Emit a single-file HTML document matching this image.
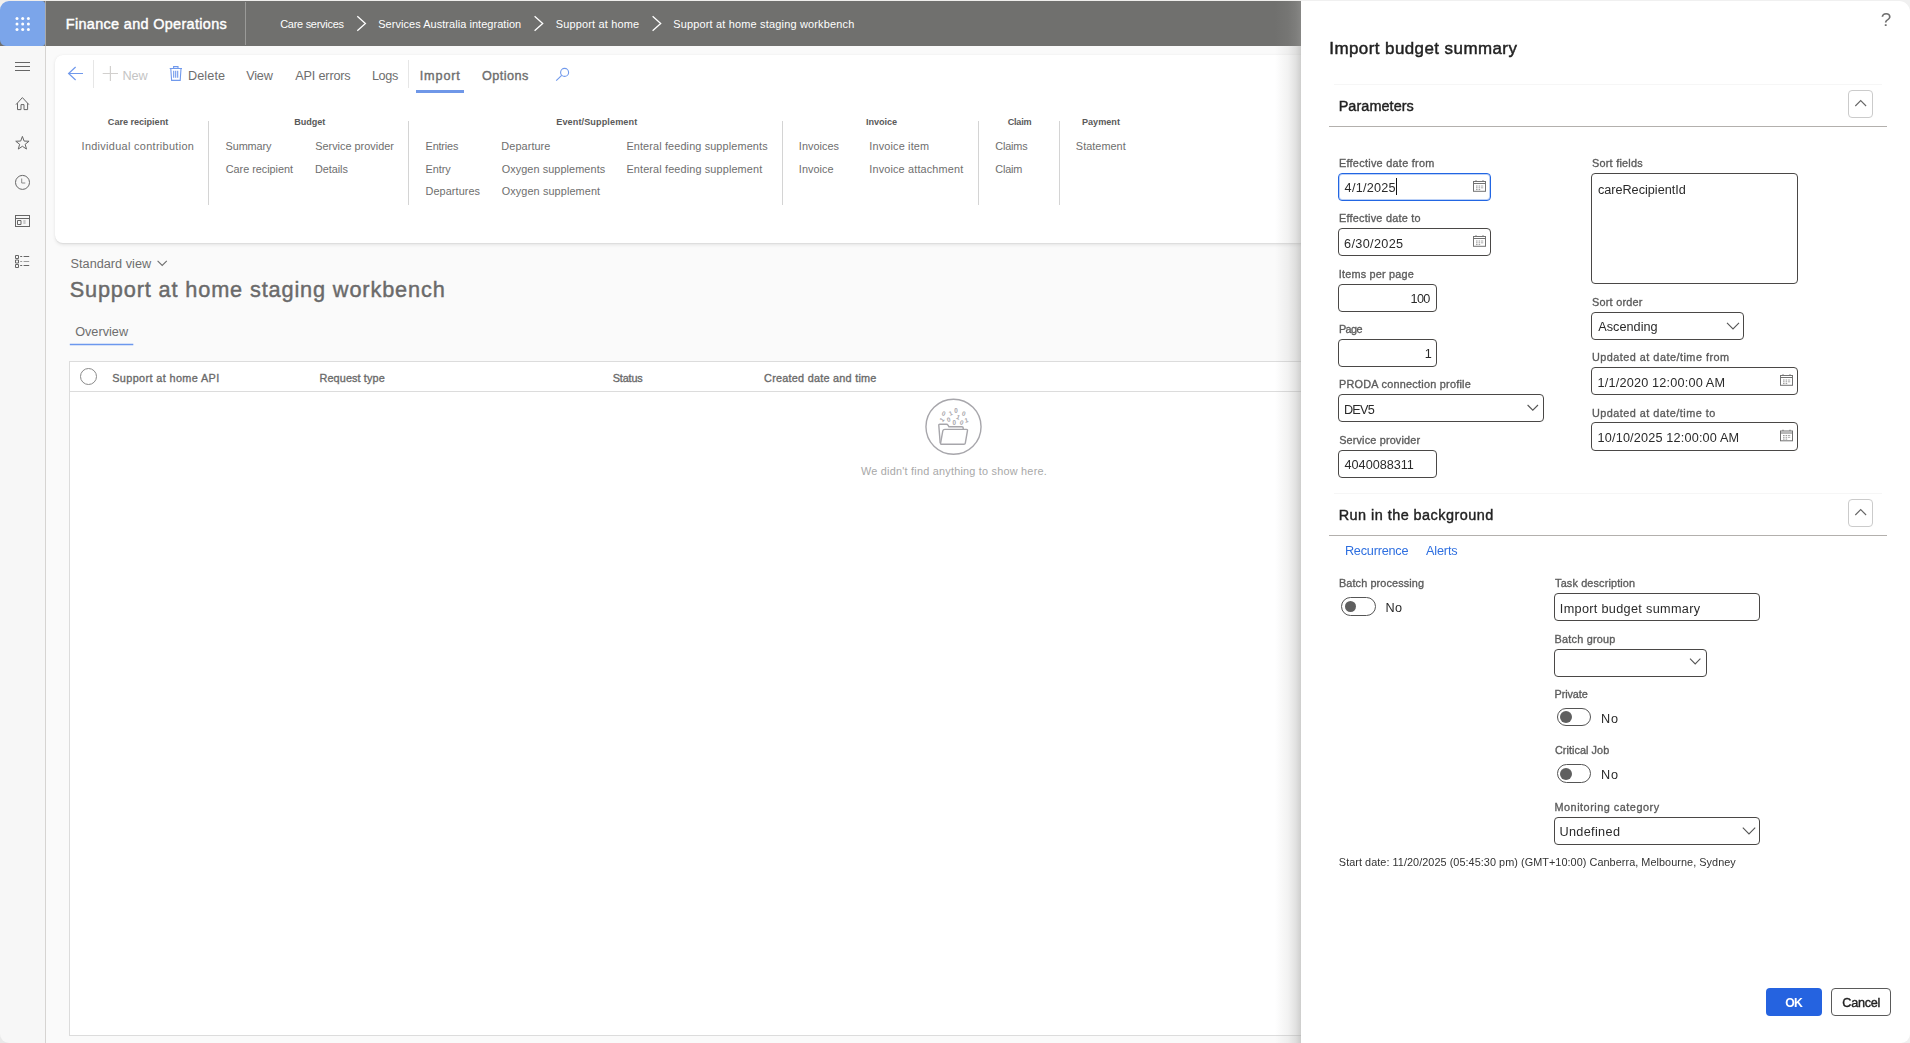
<!DOCTYPE html>
<html lang="en">
<head>
<meta charset="utf-8">
<title>Support at home staging workbench</title>
<style>
*{box-sizing:border-box;margin:0;padding:0}
html,body{width:1910px;height:1043px;overflow:hidden;background:#fafafa;font-family:"Liberation Sans",sans-serif}
.a{position:absolute}
.t{position:absolute;white-space:nowrap;line-height:20px;height:20px}
.box{position:absolute;background:#fff;border:1px solid #4a4846;border-radius:4px}
.vd{position:absolute;width:1px;background:#d4d4d4}
.tg{position:absolute;width:35px;height:19px;border:1px solid #555;border-radius:10px;background:#fff}
.tg i{position:absolute;left:3px;top:3px;width:11px;height:11px;border-radius:50%;background:#5f5f5f}
svg{position:absolute;overflow:visible}
</style>
</head>
<body>
<!-- top hairline -->
<div class="a" style="left:0;top:0;width:1910px;height:1px;background:#efeeec"></div>
<!-- header -->
<div class="a" id="hdr" style="left:0;top:1px;width:1910px;height:45px;background:#70706e"></div>
<div class="a" style="left:0;top:1px;width:10px;height:10px;background:#f1f0ee"></div>
<div class="a" style="left:0;top:1px;width:45px;height:45px;background:#7ba5ea;border-radius:9px 3px 3px 6px"></div>
<svg style="left:0;top:1px" width="45" height="45" viewBox="0 0 45 45"><g fill="#fff">
<circle cx="17" cy="17.5" r="1.5"/><circle cx="22.7" cy="17.5" r="1.5"/><circle cx="28.4" cy="17.5" r="1.5"/>
<circle cx="17" cy="23" r="1.5"/><circle cx="22.7" cy="23" r="1.5"/><circle cx="28.4" cy="23" r="1.5"/>
<circle cx="17" cy="28.5" r="1.5"/><circle cx="22.7" cy="28.5" r="1.5"/><circle cx="28.4" cy="28.5" r="1.5"/></g></svg>
<div class="a" style="left:245px;top:2px;width:1px;height:43px;background:#9a9a98"></div>
<svg style="left:0;top:0" width="700" height="46" viewBox="0 0 700 46"><g fill="none" stroke="#fff" stroke-width="1.3">
<path d="M357.3 16.2 L365.4 23.5 L357.3 30.8"/><path d="M534.6 16.2 L542.7 23.5 L534.6 30.8"/><path d="M652.6 16.2 L660.7 23.5 L652.6 30.8"/></g></svg>

<!-- sidebar -->
<div class="a" style="left:0;top:1033px;width:10px;height:10px;background:#e9e9e9"></div>
<div class="a" style="left:0;top:46px;width:45px;height:997px;background:#f7f7f7;border-radius:0 0 0 9px"></div>
<div class="a" style="left:45px;top:46px;width:1px;height:997px;background:#d6d4d2"></div>
<div class="a" style="left:45px;top:1px;width:1px;height:45px;background:#a9a9a8"></div>
<svg style="left:0;top:46px" width="45" height="240" viewBox="0 46 45 240"><g fill="none" stroke="#666" stroke-width="1">
<path d="M15 62.5H30M15 66.5H30M15 70.5H30"/>
<path d="M16 104.6 L22.4 97.6 L28.9 104.6M17.5 103.2 V109.6 H21 V104.6 H24 V109.6 H27.6 V103.2"/>
<path d="M22.40 136.40 L24.10 141.05 L29.06 141.24 L25.16 144.30 L26.51 149.06 L22.40 146.30 L18.29 149.06 L19.64 144.30 L15.74 141.24 L20.70 141.05 Z"/>
<circle cx="22.5" cy="182.4" r="7"/><path d="M21.7 178.5 V183 H25.3" stroke="#8a8a8a"/>
<rect x="15.5" y="215.5" width="14" height="11"/><path d="M15.5 218.5H29.5M17.5 220.5H21V224.5H17.5Z"/><path d="M23.3 221H25.6M23.3 223H25.6" stroke="#9a9a9a"/>
<path d="M15.5 255.5H18.5V258.5H15.5ZM15.5 260H18.5V263H15.5ZM15.5 264.5H18.5V267.5H15.5ZM20.2 256.5H22.2M23.6 256.5H29.2M20.2 265.5H22.2M23.6 265.5H29.2"/><path stroke="#9c9c9c" d="M20.2 261.5H22.2M23.6 261.5H29.2"/>
</g></svg>

<!-- action pane card -->
<div class="a" style="left:55px;top:55px;width:1400px;height:188px;background:#fff;border-radius:8px;box-shadow:0 1.6px 3.6px rgba(0,0,0,.085),0 .3px .9px rgba(0,0,0,.055)"></div>
<svg style="left:55px;top:55px" width="600" height="40" viewBox="55 55 600 40"><g fill="none">
<path d="M83 73.5H68.8M75.6 67 L68.6 73.5 L75.6 80" stroke="#7099ec" stroke-width="1.2"/>
<path d="M102.7 73.5H118M110.4 66V81" stroke="#d2d0ce" stroke-width="1.2"/>
<path d="M169.7 68.5H182M173.6 68.5V66.6H178V68.5M170.8 68.8 L171.6 80.4 H180.2 L181 68.8M173.7 70.8V77.7M175.7 70.8V77.7M177.7 70.8V77.7" stroke="#7099ec" stroke-width="1.1"/>
<circle cx="564.6" cy="72.4" r="4" stroke="#7099ec" stroke-width="1.1"/><path d="M561.7 75.3 L556.2 80.7" stroke="#7099ec" stroke-width="1.1"/>
</g></svg>
<div class="vd" style="left:93px;top:60px;height:28px;background:#e6e6e6"></div>
<div class="vd" style="left:408px;top:60px;height:28px;background:#e6e6e6"></div>
<div class="a" style="left:416px;top:90px;width:48px;height:3px;background:#6f97e8"></div>
<div class="vd" style="left:208px;top:121px;height:84px"></div>
<div class="vd" style="left:408px;top:121px;height:84px"></div>
<div class="vd" style="left:782px;top:121px;height:84px"></div>
<div class="vd" style="left:978px;top:121px;height:84px"></div>
<div class="vd" style="left:1059px;top:121px;height:84px"></div>

<!-- page title area -->
<svg style="left:155px;top:258px" width="14" height="10" viewBox="155 258 14 10"><path d="M157.6 260.8 L162.2 265.4 L166.8 260.8" fill="none" stroke="#6e6e6e" stroke-width="1.1"/></svg>
<svg style="left:70px;top:342px" width="64" height="4" viewBox="70 342 64 4"><path d="M69.8 344.5H133.3" stroke="#6c98ee" stroke-width="1.5"/></svg>
<!-- grid -->
<div class="a" style="left:69px;top:361px;width:1400px;height:675px;background:#fff;border:1px solid #dcdcdc"></div>
<div class="a" style="left:70px;top:391px;width:1400px;height:1px;background:#dcdcdc"></div>
<div class="a" style="left:80px;top:368px;width:17px;height:17px;border:1px solid #8a8a8a;border-radius:50%;background:#fff"></div>
<!-- empty state -->
<svg style="left:920px;top:395px" width="66" height="64" viewBox="920 395 66 64"><g fill="none" stroke="#a7a6ab" stroke-width="1.4">
<circle cx="953.5" cy="426.75" r="27.55"/>
<path d="M940.2 443.3 L938.8 425.4 Q938.7 424.3 939.8 424.3 H946.5 Q947.5 424.3 948 425.2 L948.9 426.7 H962 Q963.2 426.7 963.2 427.9 V429.2"/>
<path d="M944.9 429.4 H966.5 Q967.7 429.4 967.5 430.5 L965.3 443.2 Q965.1 444.3 964 444.3 H941.6 Q940.4 444.3 940.6 443.2 L942.8 430.9 Q943.1 429.4 944.9 429.4 Z"/>
</g>
<g fill="#a7a6ab" font-family="Liberation Sans, sans-serif" font-size="6.3" font-weight="bold"><text x="941.95" y="415.65" transform="rotate(20 943.7 413.4)">0</text><text x="948.85" y="415.65" transform="rotate(-20 950.6 413.4)">1</text><text x="954.25" y="412.65" transform="rotate(0 956 410.4)">0</text><text x="962.05" y="415.85" transform="rotate(15 963.8 413.6)">0</text><text x="940.05" y="421.85" transform="rotate(-50 941.8 419.6)">1</text><text x="946.95" y="421.85" transform="rotate(-15 948.7 419.6)">0</text><text x="956.45" y="419.35" transform="rotate(20 958.2 417.1)">1</text><text x="952.55" y="424.65" transform="rotate(0 954.3 422.4)">0</text><text x="959.85" y="424.65" transform="rotate(20 961.6 422.4)">0</text><text x="964.65" y="422.45" transform="rotate(-15 966.4 420.2)">1</text></g></svg>

<!-- dialog shadow + dialog -->
<div class="a" style="left:1275px;top:1px;width:26px;height:1042px;background:linear-gradient(to right,rgba(157,157,155,0),rgba(157,157,155,.13) 50%,rgba(157,157,155,.3) 80%,rgba(157,157,155,.5))"></div>
<div class="a" style="left:1301px;top:0;width:609px;height:1043px;background:#f0f0f0"></div>
<div class="a" id="dlg" style="left:1301px;top:1px;width:609px;height:1042px;background:#fff;border-radius:0 11px 9px 0"></div>
<div class="a" style="left:1334px;top:84px;width:548px;height:1px;background:#f6f6f6"></div>
<div class="a" style="left:1329px;top:126px;width:558px;height:1px;background:#b3b0ad"></div>
<div class="a" style="left:1334px;top:493px;width:548px;height:1px;background:#f6f6f6"></div>
<div class="a" style="left:1329px;top:535px;width:558px;height:1px;background:#b3b0ad"></div>
<!-- collapse buttons -->
<div class="a" style="left:1848px;top:90px;width:25px;height:28px;border:1px solid #cbcbcb;border-radius:4px;background:#fff"></div>
<div class="a" style="left:1848px;top:499px;width:25px;height:28px;border:1px solid #cbcbcb;border-radius:4px;background:#fff"></div>
<svg style="left:1848px;top:90px" width="25" height="440" viewBox="1848 90 25 440"><g fill="none" stroke="#666" stroke-width="1.1"><path d="M1855.3 106 L1860.7 100.6 L1866.1 106"/><path d="M1855.3 515 L1860.7 509.6 L1866.1 515"/></g></svg>

<!-- inputs -->
<div class="box" style="left:1338px;top:173px;width:153px;height:28px;border:1px solid #2266e3;box-shadow:inset 0 0 0 1px rgba(34,102,227,.3)"></div>
<div class="a" style="left:1396px;top:178px;width:1px;height:17px;background:#111"></div>
<div class="box" style="left:1338px;top:228px;width:153px;height:28px"></div>
<div class="box" style="left:1338px;top:284px;width:99px;height:28px"></div>
<div class="box" style="left:1338px;top:339px;width:99px;height:28px"></div>
<div class="box" style="left:1338px;top:394px;width:206px;height:28px"></div>
<div class="box" style="left:1338px;top:450px;width:99px;height:28px"></div>
<div class="box" style="left:1591px;top:173px;width:207px;height:111px"></div>
<div class="box" style="left:1591px;top:312px;width:153px;height:28px"></div>
<div class="box" style="left:1591px;top:367px;width:207px;height:28px"></div>
<div class="box" style="left:1591px;top:422px;width:207px;height:29px"></div>
<div class="box" style="left:1554px;top:593px;width:206px;height:28px"></div>
<div class="box" style="left:1554px;top:649px;width:153px;height:28px"></div>
<div class="box" style="left:1554px;top:817px;width:206px;height:28px"></div>
<!-- toggles -->
<div class="tg" style="left:1341px;top:597px"><i></i></div>
<div class="tg" style="left:1557px;top:708px;width:34px;height:18px"><i style="left:2px;top:2px;width:12px;height:12px"></i></div>
<div class="tg" style="left:1557px;top:764px;width:34px;height:19px"><i style="left:2px;top:2.5px;width:12px;height:12px"></i></div>
<!-- chevrons + calendar icons -->
<svg style="left:1301px;top:0" width="609" height="1043" viewBox="1301 0 609 1043">
<g fill="none" stroke="#555" stroke-width="1.1">
<path d="M1527.6 405 L1532.8 410.2 L1538 405"/>
<path d="M1727 322.9 L1733 328.9 L1739 322.9"/>
<path d="M1690 658.7 L1695.2 663.9 L1700.4 658.7"/>
<path d="M1742.8 827.7 L1749 833.9 L1755.2 827.7"/>
</g>
<g fill="none" stroke="#737373" stroke-width="1">
<g><rect x="1473.5" y="181.5" width="12" height="9.8"/><path d="M1473.5 183.5H1485.5M1476 180.2V181.5M1483 180.2V181.5"/><path d="M1476 186H1484M1476 187.8H1484M1476 189.6H1481" stroke-dasharray="1.6 1" stroke="#9a9a9a"/></g>
<g transform="translate(0 55)"><rect x="1473.5" y="181.5" width="12" height="9.8"/><path d="M1473.5 183.5H1485.5M1476 180.2V181.5M1483 180.2V181.5"/><path d="M1476 186H1484M1476 187.8H1484M1476 189.6H1481" stroke-dasharray="1.6 1" stroke="#9a9a9a"/></g>
<g transform="translate(307 194)"><rect x="1473.5" y="181.5" width="12" height="9.8"/><path d="M1473.5 183.5H1485.5M1476 180.2V181.5M1483 180.2V181.5"/><path d="M1476 186H1484M1476 187.8H1484M1476 189.6H1481" stroke-dasharray="1.6 1" stroke="#9a9a9a"/></g>
<g transform="translate(307 249.5)"><rect x="1473.5" y="181.5" width="12" height="9.8"/><path d="M1473.5 183.5H1485.5M1476 180.2V181.5M1483 180.2V181.5"/><path d="M1476 186H1484M1476 187.8H1484M1476 189.6H1481" stroke-dasharray="1.6 1" stroke="#9a9a9a"/></g>
</g></svg>
<!-- buttons -->
<div class="a" style="left:1766px;top:988px;width:56px;height:28px;background:#2563e0;border-radius:4px"></div>
<div class="a" style="left:1831px;top:988px;width:60px;height:28px;background:#fff;border:1px solid #5a5a5a;border-radius:4px"></div>
<span class="t" style="left:65.82px;top:14.00px;font-size:14.45px;color:#ffffff;-webkit-text-stroke:0.43px #ffffff;letter-spacing:0.325px">Finance and Operations</span>
<span class="t" style="left:280.21px;top:14.00px;font-size:10.96px;color:#ffffff;letter-spacing:-0.267px">Care services</span>
<span class="t" style="left:378.23px;top:14.00px;font-size:10.96px;color:#ffffff;letter-spacing:0.058px">Services Australia integration</span>
<span class="t" style="left:555.84px;top:14.00px;font-size:10.96px;color:#ffffff;letter-spacing:0.160px">Support at home</span>
<span class="t" style="left:673.23px;top:14.00px;font-size:10.96px;color:#ffffff;letter-spacing:0.179px">Support at home staging workbench</span>
<span class="t" style="left:122.44px;top:66.00px;font-size:12.68px;color:#c4c4c4;letter-spacing:-0.126px">New</span>
<span class="t" style="left:188.00px;top:66.00px;font-size:12.68px;color:#6e6e6e;letter-spacing:0.087px">Delete</span>
<span class="t" style="left:246.34px;top:66.00px;font-size:12.68px;color:#6e6e6e;letter-spacing:-0.255px">View</span>
<span class="t" style="left:295.27px;top:66.00px;font-size:12.68px;color:#6e6e6e;letter-spacing:-0.179px">API errors</span>
<span class="t" style="left:371.89px;top:66.00px;font-size:12.68px;color:#6e6e6e;letter-spacing:-0.326px">Logs</span>
<span class="t" style="left:419.78px;top:66.00px;font-size:12.68px;color:#6e6e6e;-webkit-text-stroke:0.38px #6e6e6e;letter-spacing:0.833px">Import</span>
<span class="t" style="left:482.02px;top:66.00px;font-size:12.68px;color:#6e6e6e;-webkit-text-stroke:0.38px #6e6e6e;letter-spacing:0.427px">Options</span>
<span class="t" style="left:107.85px;top:112.00px;font-size:9.12px;color:#5a5a5a;font-weight:bold;letter-spacing:-0.029px">Care recipient</span>
<span class="t" style="left:294.25px;top:112.00px;font-size:9.12px;color:#5a5a5a;font-weight:bold;letter-spacing:-0.055px">Budget</span>
<span class="t" style="left:556.24px;top:112.00px;font-size:9.12px;color:#5a5a5a;font-weight:bold;letter-spacing:0.102px">Event/Supplement</span>
<span class="t" style="left:865.96px;top:112.00px;font-size:9.12px;color:#5a5a5a;font-weight:bold;letter-spacing:-0.058px">Invoice</span>
<span class="t" style="left:1007.81px;top:112.00px;font-size:9.12px;color:#5a5a5a;font-weight:bold;letter-spacing:-0.274px">Claim</span>
<span class="t" style="left:1081.98px;top:112.00px;font-size:9.12px;color:#5a5a5a;font-weight:bold;letter-spacing:-0.005px">Payment</span>
<span class="t" style="left:81.55px;top:136.00px;font-size:10.86px;color:#6e6e6e;letter-spacing:0.327px">Individual contribution</span>
<span class="t" style="left:225.60px;top:136.00px;font-size:10.86px;color:#6e6e6e;letter-spacing:-0.115px">Summary</span>
<span class="t" style="left:225.72px;top:159.00px;font-size:10.86px;color:#6e6e6e;letter-spacing:-0.027px">Care recipient</span>
<span class="t" style="left:315.24px;top:136.00px;font-size:10.86px;color:#6e6e6e;letter-spacing:0.011px">Service provider</span>
<span class="t" style="left:315.07px;top:159.00px;font-size:10.86px;color:#6e6e6e;letter-spacing:-0.067px">Details</span>
<span class="t" style="left:425.58px;top:136.00px;font-size:10.86px;color:#6e6e6e;letter-spacing:-0.169px">Entries</span>
<span class="t" style="left:425.58px;top:159.00px;font-size:10.86px;color:#6e6e6e;letter-spacing:-0.081px">Entry</span>
<span class="t" style="left:425.58px;top:181.00px;font-size:10.86px;color:#6e6e6e;letter-spacing:0.080px">Departures</span>
<span class="t" style="left:501.36px;top:136.00px;font-size:10.86px;color:#6e6e6e;letter-spacing:0.090px">Departure</span>
<span class="t" style="left:501.63px;top:159.00px;font-size:10.86px;color:#6e6e6e;letter-spacing:0.090px">Oxygen supplements</span>
<span class="t" style="left:501.63px;top:181.00px;font-size:10.86px;color:#6e6e6e;letter-spacing:0.118px">Oxygen supplement</span>
<span class="t" style="left:626.42px;top:136.00px;font-size:10.86px;color:#6e6e6e;letter-spacing:0.135px">Enteral feeding supplements</span>
<span class="t" style="left:626.42px;top:159.00px;font-size:10.86px;color:#6e6e6e;letter-spacing:0.143px">Enteral feeding supplement</span>
<span class="t" style="left:798.84px;top:136.00px;font-size:10.86px;color:#6e6e6e;letter-spacing:0.033px">Invoices</span>
<span class="t" style="left:798.84px;top:159.00px;font-size:10.86px;color:#6e6e6e;letter-spacing:0.066px">Invoice</span>
<span class="t" style="left:869.26px;top:136.00px;font-size:10.86px;color:#6e6e6e;letter-spacing:0.174px">Invoice item</span>
<span class="t" style="left:869.26px;top:159.00px;font-size:10.86px;color:#6e6e6e;letter-spacing:0.165px">Invoice attachment</span>
<span class="t" style="left:995.23px;top:136.00px;font-size:10.86px;color:#6e6e6e;letter-spacing:-0.160px">Claims</span>
<span class="t" style="left:995.23px;top:159.00px;font-size:10.86px;color:#6e6e6e;letter-spacing:-0.162px">Claim</span>
<span class="t" style="left:1075.85px;top:136.00px;font-size:10.86px;color:#6e6e6e;letter-spacing:0.039px">Statement</span>
<span class="t" style="left:70.56px;top:254.00px;font-size:12.68px;color:#6e6e6e;letter-spacing:0.024px">Standard view</span>
<span class="t" style="left:69.65px;top:280.00px;font-size:21.73px;color:#6a6a6a;-webkit-text-stroke:0.43px #6a6a6a;letter-spacing:0.856px">Support at home staging workbench</span>
<span class="t" style="left:75.14px;top:322.00px;font-size:12.68px;color:#6e6e6e;letter-spacing:0.017px">Overview</span>
<span class="t" style="left:112.23px;top:368.00px;font-size:10.86px;color:#6a6a6a;-webkit-text-stroke:0.33px #6a6a6a;letter-spacing:0.378px">Support at home API</span>
<span class="t" style="left:319.52px;top:368.00px;font-size:10.86px;color:#6a6a6a;-webkit-text-stroke:0.33px #6a6a6a;letter-spacing:0.108px">Request type</span>
<span class="t" style="left:612.73px;top:368.00px;font-size:10.86px;color:#6a6a6a;-webkit-text-stroke:0.33px #6a6a6a;letter-spacing:-0.154px">Status</span>
<span class="t" style="left:764.09px;top:368.00px;font-size:10.86px;color:#6a6a6a;-webkit-text-stroke:0.33px #6a6a6a;letter-spacing:0.242px">Created date and time</span>
<span class="t" style="left:861.06px;top:461.00px;font-size:10.86px;color:#a8a8a8;letter-spacing:0.227px">We didn't find anything to show here.</span>
<div class="a" style="left:0;top:0;width:1910px;height:1043px;will-change:transform">
<span class="t" style="left:1880.84px;top:10.00px;font-size:18.91px;color:#6e6e6e">?</span>
<span class="t" style="left:1329.24px;top:39.00px;font-size:16.93px;color:#222;-webkit-text-stroke:0.47px #222;letter-spacing:0.448px">Import budget summary</span>
<span class="t" style="left:1338.66px;top:96.00px;font-size:14.45px;color:#222;-webkit-text-stroke:0.40px #222;letter-spacing:0.060px">Parameters</span>
<span class="t" style="left:1338.94px;top:153.00px;font-size:10.86px;color:#5c5c5c;-webkit-text-stroke:0.33px #5c5c5c;letter-spacing:0.281px">Effective date from</span>
<span class="t" style="left:1344.59px;top:178.00px;font-size:12.68px;color:#2a2a2a;letter-spacing:0.250px">4/1/2025</span>
<span class="t" style="left:1591.99px;top:153.00px;font-size:10.86px;color:#5c5c5c;-webkit-text-stroke:0.33px #5c5c5c;letter-spacing:0.245px">Sort fields</span>
<span class="t" style="left:1597.88px;top:180.00px;font-size:12.68px;color:#2a2a2a;letter-spacing:-0.011px">careRecipientId</span>
<span class="t" style="left:1338.94px;top:208.00px;font-size:10.86px;color:#5c5c5c;-webkit-text-stroke:0.33px #5c5c5c;letter-spacing:0.251px">Effective date to</span>
<span class="t" style="left:1344.11px;top:234.00px;font-size:12.68px;color:#2a2a2a;letter-spacing:0.327px">6/30/2025</span>
<span class="t" style="left:1338.75px;top:264.00px;font-size:10.86px;color:#5c5c5c;-webkit-text-stroke:0.33px #5c5c5c;letter-spacing:0.197px">Items per page</span>
<span class="t" style="left:1410.56px;top:289.00px;font-size:12.68px;color:#2a2a2a;letter-spacing:-0.637px">100</span>
<span class="t" style="left:1338.95px;top:319.00px;font-size:10.86px;color:#5c5c5c;-webkit-text-stroke:0.33px #5c5c5c;letter-spacing:-0.588px">Page</span>
<span class="t" style="left:1424.72px;top:344.00px;font-size:12.68px;color:#2a2a2a">1</span>
<span class="t" style="left:1338.95px;top:374.00px;font-size:10.86px;color:#5c5c5c;-webkit-text-stroke:0.33px #5c5c5c;letter-spacing:0.249px">PRODA connection profile</span>
<span class="t" style="left:1343.88px;top:400.00px;font-size:12.68px;color:#2a2a2a;letter-spacing:-0.752px">DEV5</span>
<span class="t" style="left:1339.13px;top:430.00px;font-size:10.86px;color:#5c5c5c;-webkit-text-stroke:0.33px #5c5c5c;letter-spacing:0.166px">Service provider</span>
<span class="t" style="left:1344.59px;top:455.00px;font-size:12.68px;color:#2a2a2a;letter-spacing:-0.027px">4040088311</span>
<span class="t" style="left:1591.99px;top:292.00px;font-size:10.86px;color:#5c5c5c;-webkit-text-stroke:0.33px #5c5c5c;letter-spacing:0.246px">Sort order</span>
<span class="t" style="left:1598.26px;top:317.00px;font-size:12.68px;color:#2a2a2a;letter-spacing:0.020px">Ascending</span>
<span class="t" style="left:1591.89px;top:347.00px;font-size:10.86px;color:#5c5c5c;-webkit-text-stroke:0.33px #5c5c5c;letter-spacing:0.486px">Updated at date/time from</span>
<span class="t" style="left:1597.58px;top:373.00px;font-size:12.68px;color:#2a2a2a;letter-spacing:0.183px">1/1/2020 12:00:00 AM</span>
<span class="t" style="left:1591.89px;top:403.00px;font-size:10.86px;color:#5c5c5c;-webkit-text-stroke:0.33px #5c5c5c;letter-spacing:0.476px">Updated at date/time to</span>
<span class="t" style="left:1597.58px;top:428.00px;font-size:12.68px;color:#2a2a2a;letter-spacing:0.166px">10/10/2025 12:00:00 AM</span>
<span class="t" style="left:1338.66px;top:505.00px;font-size:14.45px;color:#222;-webkit-text-stroke:0.40px #222;letter-spacing:0.467px">Run in the background</span>
<span class="t" style="left:1344.88px;top:541.00px;font-size:12.68px;color:#2e6fe0;letter-spacing:-0.205px">Recurrence</span>
<span class="t" style="left:1425.99px;top:541.00px;font-size:12.68px;color:#2e6fe0;letter-spacing:-0.159px">Alerts</span>
<span class="t" style="left:1338.94px;top:573.00px;font-size:10.86px;color:#5c5c5c;-webkit-text-stroke:0.33px #5c5c5c;letter-spacing:0.120px">Batch processing</span>
<span class="t" style="left:1385.44px;top:598.00px;font-size:12.68px;color:#2a2a2a;letter-spacing:0.306px">No</span>
<span class="t" style="left:1555.10px;top:573.00px;font-size:10.86px;color:#5c5c5c;-webkit-text-stroke:0.33px #5c5c5c;letter-spacing:0.142px">Task description</span>
<span class="t" style="left:1559.80px;top:599.00px;font-size:12.68px;color:#2a2a2a;letter-spacing:0.322px">Import budget summary</span>
<span class="t" style="left:1554.52px;top:629.00px;font-size:10.86px;color:#5c5c5c;-webkit-text-stroke:0.33px #5c5c5c;letter-spacing:0.225px">Batch group</span>
<span class="t" style="left:1554.53px;top:684.00px;font-size:10.86px;color:#5c5c5c;-webkit-text-stroke:0.33px #5c5c5c;letter-spacing:-0.097px">Private</span>
<span class="t" style="left:1601.00px;top:709.00px;font-size:12.68px;color:#2a2a2a;letter-spacing:0.734px">No</span>
<span class="t" style="left:1554.96px;top:740.00px;font-size:10.86px;color:#5c5c5c;-webkit-text-stroke:0.33px #5c5c5c;letter-spacing:0.046px">Critical Job</span>
<span class="t" style="left:1601.00px;top:765.00px;font-size:12.68px;color:#2a2a2a;letter-spacing:0.734px">No</span>
<span class="t" style="left:1554.52px;top:797.00px;font-size:10.86px;color:#5c5c5c;-webkit-text-stroke:0.33px #5c5c5c;letter-spacing:0.510px">Monitoring category</span>
<span class="t" style="left:1559.40px;top:822.00px;font-size:12.68px;color:#2a2a2a;letter-spacing:0.345px">Undefined</span>
<span class="t" style="left:1338.85px;top:852.00px;font-size:10.86px;color:#333;letter-spacing:0.051px">Start date: 11/20/2025 (05:45:30 pm) (GMT+10:00) Canberra, Melbourne, Sydney</span>
<span class="t" style="left:1785.19px;top:993.00px;font-size:12.22px;color:#ffffff;font-weight:bold;letter-spacing:-0.589px">OK</span>
<span class="t" style="left:1842.25px;top:993.00px;font-size:12.68px;color:#222;-webkit-text-stroke:0.38px #222;letter-spacing:-0.251px">Cancel</span>
</div>
</body>
</html>
